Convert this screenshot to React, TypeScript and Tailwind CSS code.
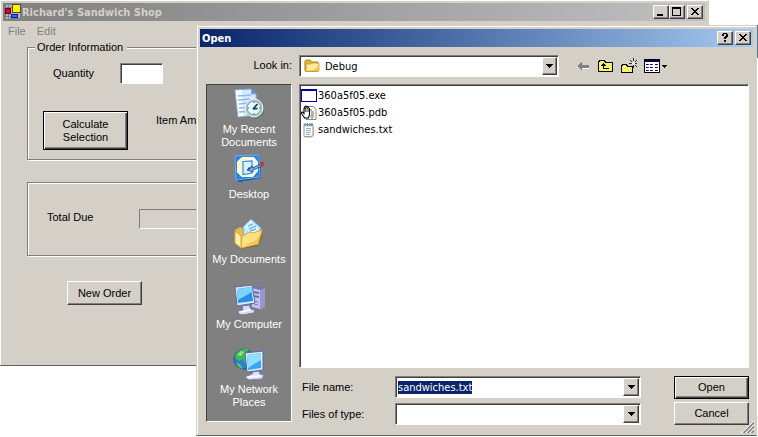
import React, { useEffect, useRef } from "react";

const RAISED =
  "bg-[#d4d0c8] border border-t-white border-l-white border-r-[#404040] border-b-[#404040] shadow-[inset_-1px_-1px_0_#808080]";
const DEFAULT_BUTTON =
  "bg-[#d4d0c8] border border-black shadow-[inset_1px_1px_0_#fff,inset_-1px_-1px_0_#404040,inset_-2px_-2px_0_#808080]";
const SUNKEN =
  "bg-white border border-t-[#808080] border-l-[#808080] border-r-white border-b-white shadow-[inset_1px_1px_0_#404040]";
const WINDOW =
  "bg-[#d4d0c8] border border-t-[#d4d0c8] border-l-[#d4d0c8] border-r-[#d4d0c8] border-b-[#606060] shadow-[inset_1px_1px_0_#fff] p-[3px]";
const ETCHED = "border border-[#808080] shadow-[1px_1px_0_#fff,inset_1px_1px_0_#fff]";
const TAHOMA = "font-['DejaVu_Sans_Condensed','DejaVu_Sans',sans-serif]";

interface CaptionButtonProps {
  label: string;
  path: string;
}

const CaptionButton: React.FC<CaptionButtonProps> = ({ label, path }) => (
  <button aria-label={label} className={`flex h-[14px] w-4 items-center justify-center ${RAISED}`}>
    <svg width="12" height="10" viewBox="0 0 12 10" shapeRendering="crispEdges" className="shrink-0">
      <path d={path} fill="#000" />
    </svg>
  </button>
);

const CLOSE_PATH =
  "M2 1h2v1h1v1h2v-1h1v-1h2v1h-1v1h-1v1h-1v1h1v1h1v1h1v1h-2v-1h-1v-1h-2v1h-1v1h-2v-1h1v-1h1v-1h1v-1h-1v-1h-1v-1h-1z";
const MIN_PATH = "M2 7h6v2h-6z";
const MAX_PATH = "M1 0h9v2h-9zM1 2h1v7h-1zM9 2h1v7h-1zM2 8h7v1h-7z";
const HELP_PATH = "M3 1h1v-1h4v1h1v3h-1v1h-1v1h-2v-2h1v-1h1v-2h-2v2h-2zM5 7h2v2h-2z";

const DropArrow = () => (
  <span className={`pointer-events-none flex w-4 items-center justify-center ${RAISED}`}>
    <svg width="7" height="4" viewBox="0 0 7 4" shapeRendering="crispEdges">
      <path d="M0 0h7v1h-1v1h-1v1h-1v1h-1v-1h-1v-1h-1v-1h-1z" fill="#000" />
    </svg>
  </span>
);

const AppIcon = () => (
  <svg width="16" height="16" viewBox="0 0 16 16" shapeRendering="crispEdges">
    <rect x="0" y="1" width="15" height="14" fill="#b8b8b0" />
    <path d="M0 3.500h7M0 12.500h7M3.500 1v14M.5 1v14M5 14.500h10" stroke="#808080" fill="none" />
    <rect x="7" y="0" width="9" height="9" fill="#505020" />
    <rect x="8" y="1" width="7" height="7" fill="#fff200" />
    <rect x="0" y="4" width="6" height="6" fill="#600018" />
    <rect x="1" y="5" width="4" height="4" fill="#e00030" />
    <rect x="6" y="10" width="7" height="4" fill="#0018a0" />
    <rect x="7" y="11" width="5" height="2" fill="#3070ff" />
  </svg>
);

const FolderIcon = () => (
  <svg width="16" height="16" viewBox="0 0 16 16">
    <path d="M1 3.500Q1 2 2.500 2H6l1.500 2H13q1.500 0 1.500 1.500V12q0 1.500-1.500 1.500H2.500Q1 13.500 1 12z" fill="#e8b83c" stroke="#a87b18" />
    <path d="M2 12.500V6h4.500L8 5h6.500L15 6v6q0 1.500-1.500 1.500H3q-1 0-1-1z" fill="#ffec96" stroke="#c39829" strokeWidth=".8" />
    <path d="M3 12.500Q12 12.500 14.500 7V12q0 1-1 1H3z" fill="#f0c850" />
  </svg>
);

const ExeIcon = () => (
  <svg width="16" height="16" viewBox="0 0 16 16" shapeRendering="crispEdges">
    <rect x="0" y="1" width="16" height="13" fill="#0000a8" />
    <rect x="1" y="3" width="14" height="10" fill="#fff" />
  </svg>
);

// Document with the pan-hand cursor resting on it
const PdbIcon = () => (
  <svg width="16" height="16" viewBox="0 0 16 16">
    <path d="M4.500 1.500h8l2.500 3v10H5z" fill="#fff" stroke="#888" />
    <path d="M8 5h3M10 7h3M10 9h3M9 11h4M10 13h2" stroke="#555" strokeWidth=".9" />
    <path
      d="M3 12L.5 8.500Q0 7 1.500 7L3 8.500V3.500Q3 2 4 3V1.500Q5 .5 5.500 1.500V2Q7 1 7 3Q8.500 2.500 8.500 4.500V9.500L7.500 13H3.500z"
      fill="#fff"
      stroke="#000"
      strokeWidth="1.100"
    />
    <path d="M4.500 3v4M6 3v4M7.200 4v3" stroke="#000" strokeWidth=".6" />
  </svg>
);

const TextIcon = () => (
  <svg width="16" height="16" viewBox="0 0 16 16">
    <path d="M3 2.500h9v10L10.500 14.500H3z" fill="#fff" stroke="#8a98a4" />
    <path d="M4 3h7.500v1.500H4z" fill="#b4cddc" />
    <path d="M4 1v3M6.500 1v3M9 1v3M11 1v3" stroke="#6c7b86" />
    <path d="M5 6.500h5M5 8.500h5M5 10.500h5M5 12.500h4" stroke="#7fa9b6" strokeWidth=".9" />
    <path d="M12.500 5v8L11 15H4" fill="none" stroke="#c8ad80" />
  </svg>
);

const RecentIcon = () => (
  <svg width="32" height="32" viewBox="0 0 32 32">
    <path d="M2 2l16-1 5 5 1 21-19 2z" fill="#d6e9ff" stroke="#87aee0" />
    <path d="M2.500 2.500l6-.5 2 26-5 .5z" fill="#f8fcff" />
    <path d="M18 1l.5 5.500L23 6z" fill="#5b95db" />
    <path d="M5 8l13-1M5 12l12-1M6 16l9-1M6 20l7-.5M6 24l7-.5" stroke="#8cb8ee" strokeWidth="1.300" />
    <circle cx="22" cy="21" r="9.500" fill="#65747d" />
    <circle cx="21" cy="20" r="9" fill="#b3c6c9" stroke="#edf5f5" />
    <circle cx="21" cy="20" r="6.800" fill="#e4fbff" stroke="#899fa7" />
    <path d="M20 21l4.500-5M20 21l4.500-.5" stroke="#143b64" strokeWidth="1.700" />
    <path d="M21 14v1M21 25v1M15 20h1M26 20h1" stroke="#345c78" />
  </svg>
);

const DesktopIcon = () => (
  <svg width="32" height="32" viewBox="0 0 32 32">
    <path d="M2 3l25-1 1 23-22 4-3-3z" fill="#1757a8" />
    <path d="M2 3l24-1 1 22-24 3z" fill="#2f82da" stroke="#65b1f7" />
    <path d="M9 4h12l4 5v9l-5 6H9l-5-5V9z" fill="#eefaff" />
    <path d="M8 5L4 9v10l5 5h5v-3H9V8h8V4z" fill="#fff8ca" />
    <path d="M10 8.500l9-.5v12l-9 1.500z" fill="#d9f0ff" stroke="#328bd7" strokeWidth="1.200" />
    <path d="M14 17l5-4v2l9-4 1 2-9 4v2z" fill="#6eb7ef" stroke="#153e7d" strokeWidth=".8" />
    <path d="M14 17l4-1-2-2z" fill="#174b7e" />
    <circle cx="29" cy="11" r="2.300" fill="#c23d30" />
  </svg>
);

const DocumentsIcon = () => (
  <svg width="32" height="32" viewBox="0 0 32 32">
    <path d="M2 13l6-4 6 2 13-3 2 12-4 8-16 3-7-5z" fill="#8b6b24" />
    <path d="M2 12l5-3 5 2 12-3 1 12-16 9-6-4z" fill="#e9b94f" />
    <path d="M10 9l8-8 10 9-7 14-10-6z" fill="#bfe5ff" stroke="#73b7e6" />
    <path d="M12 9l6-7 8 9-5 7z" fill="#e0f4ff" />
    <path d="M15 8l5-2M16 11l7-3M17 13l6-2" stroke="#70bce5" strokeWidth="1.500" />
    <path d="M9 18l8-4 3 1 9-3-4 14-17 4z" fill="#ffe184" stroke="#d6aa3f" />
    <path d="M2 13l6 5v12l-6-5z" fill="#fff0a9" stroke="#d6aa3f" />
    <path d="M10 28l15-3 3-10-5 7z" fill="#f2c654" />
  </svg>
);

const ComputerIcon = () => (
  <svg width="32" height="32" viewBox="0 0 32 32">
    <path d="M19 5l4-2 9 2v19l-5 3-8-2z" fill="#7376aa" />
    <path d="M19 5l8 2v19l-8-2z" fill="#c3c4ea" />
    <path d="M27 7l5-2v19l-5 3z" fill="#9698ce" />
    <path d="M20 9l6 1M20 13l6 1" stroke="#666fae" strokeWidth="2" />
    <path d="M21 18l4 1M21 21l4 1" stroke="#7b81b7" />
    <path d="M2 4l17-2 3 18-18 3z" fill="#dce8ff" stroke="#586da4" />
    <path d="M4 6l14-2 2 14-15 2z" fill="#268de9" />
    <path d="M4 6l14-2 1 5L5 17z" fill="#7bd3ff" />
    <path d="M9 23l7-1 2 4 4 1-1 3-12 2-5-2 6-3z" fill="#dbdcf2" stroke="#7376a5" />
    <path d="M6 29l12-2" stroke="#fff" strokeWidth="1.500" />
  </svg>
);

const NetworkIcon = () => (
  <svg width="32" height="32" viewBox="0 0 32 32">
    <circle cx="11" cy="11" r="10" fill="#287fd0" stroke="#17569b" />
    <path d="M10 1Q2 3 2 10l4 3 4-2 1 4 4-1-1-4 3-1-4-5 3-2q-3-2-6-1z" fill="#43b84d" />
    <path d="M3 15l4 1 3 5q-5-1-7-6z" fill="#65c45f" />
    <path d="M4 7l4-4 3 1-3 4z" fill="#96e078" />
    <path d="M12 5l18-2v19l-16 2z" fill="#e1e9ff" stroke="#5368a7" />
    <path d="M14 7l14-2v15l-13 2z" fill="#3aa5ee" />
    <path d="M14 7l14-2v7l-13 8z" fill="#8ce0ff" />
    <path d="M20 24l6-1 1 3 4 1-2 4-13 1-4-3 7-3z" fill="#dfdff5" stroke="#7d80ae" />
    <path d="M14 29l13-1" stroke="#fff" strokeWidth="1.500" />
  </svg>
);

const places = [
  { label: "My Recent Documents", icon: <RecentIcon /> },
  { label: "Desktop", icon: <DesktopIcon /> },
  { label: "My Documents", icon: <DocumentsIcon /> },
  { label: "My Computer", icon: <ComputerIcon /> },
  { label: "My Network Places", icon: <NetworkIcon /> },
];

const files = [
  { name: "360a5f05.exe", icon: <ExeIcon /> },
  { name: "360a5f05.pdb", icon: <PdbIcon /> },
  { name: "sandwiches.txt", icon: <TextIcon /> },
];

const ShopWindow = () => (
  <main className={`absolute -top-px -left-px right-[49px] ${WINDOW}`}>
    <header className="flex h-[18px] items-center bg-linear-to-r from-[#808080] to-[#c0c0c0] px-0.5">
      <AppIcon />
      <h1 className={`ml-px flex-1 text-[11px] font-bold text-[#d4d0c8] ${TAHOMA}`}>Richard's Sandwich Shop</h1>
      <CaptionButton label="Minimize" path={MIN_PATH} />
      <CaptionButton label="Maximize" path={MAX_PATH} />
      <div className="ml-0.5 flex">
        <CaptionButton label="Close" path={CLOSE_PATH} />
      </div>
    </header>
    <nav className="flex h-5 items-center gap-[11px] pl-[5px] text-[#808080]">
      <button>File</button>
      <button>Edit</button>
    </nav>

    <div className="px-6 pb-[57px]">
      <fieldset className={`h-[119px] pl-[15px] ${ETCHED}`}>
        <legend className="-ml-2 bg-[#d4d0c8] pr-1 pl-0.5">Order Information</legend>
        <div className="flex items-center pt-[9px] pl-[10px]">
          <label htmlFor="quantity" className="w-[67px]">Quantity</label>
          <input id="quantity" className={`h-[21px] w-[43px] px-1 outline-none ${SUNKEN}`} />
        </div>
        <div className="mt-[27px] flex items-start">
          <button className={`h-[39px] w-[85px] px-2 leading-[13px] ${DEFAULT_BUTTON}`}>
            Calculate Selection
          </button>
          <span className="ml-7 pt-[3px] whitespace-nowrap">Item Amount</span>
        </div>
      </fieldset>

      <section className={`mt-[22px] flex h-[74px] items-center pl-[19px] ${ETCHED}`}>
        <label htmlFor="total" className="w-[92px] pb-1">Total Due</label>
        <output
          id="total"
          className="h-5 w-[90px] border border-t-[#808080] border-l-[#808080] border-r-white border-b-white"
        />
      </section>

      <button className={`mt-[25px] ml-10 h-6 w-[75px] ${RAISED}`}>New Order</button>
    </div>
  </main>
);

const Toolbar = () => (
  <div className="flex w-[189px] items-center pl-[17px]">
    <button aria-label="Back">
      <svg width="14" height="16" viewBox="0 0 14 16" shapeRendering="crispEdges">
        <path d="M1 8h1v-1h1v-1h1v-1h1v-1h1v3h7v3h-7v2h-1v-1h-1v-1h-1v-1h-1v-1h-1z" fill="#808080" />
        <path d="M6 10.500h7" stroke="#fff" />
      </svg>
    </button>
    <button aria-label="Up One Level" className="ml-2">
      <svg width="16" height="16" viewBox="0 0 16 16" shapeRendering="crispEdges">
        <path d="M0 3h1v-1h6v1h1v1h7v10h-15z" fill="#000" />
        <path d="M1 4h1v-1h4v1h1v1h7v8h-13z" fill="#f6f070" />
        <path d="M5 5h1v1h1v1h1v1h-2v2h5v1h-6v-3h-2v-1h1v-1h1z" fill="#000" />
      </svg>
    </button>
    <button aria-label="Create New Folder" className="ml-[7px]">
      <svg width="17" height="16" viewBox="0 0 17 16" shapeRendering="crispEdges">
        <path d="M0 7h1v-1h5v1h1v1h5v7h-12z" fill="#000" />
        <path d="M1 8h1v-1h3v1h1v1h5v5h-10z" fill="#f6f070" />
        <path d="M12 0h1v3h-1zM12 7h1v3h-1zM8 5h3v1h-3zM14 5h2v1h-2zM9 2h1v1h1v1h-1v-1h-1zM15 2h1v1h-1v1h-1v-1h1zM14 7h1v1h1v1h-1v-1h-1z" fill="#303030" />
        <path d="M12 4h1v1h1v1h-1v1h-1v-1h-1v-1h1z" fill="#fff" />
      </svg>
    </button>
    <button aria-label="Views" className="ml-1.5 flex items-center gap-0.5">
      <svg width="16" height="16" viewBox="0 0 16 16" shapeRendering="crispEdges">
        <path d="M.5 1.500h15v13h-15z" fill="#fff" stroke="#000" />
        <path d="M1 2h14v2h-14z" fill="#000060" />
        <path d="M2 6h2v1h-2zM6 6h2v1h-2zM11 6h2v1h-2zM2 9h2v1h-2zM6 9h2v1h-2zM11 9h2v1h-2zM2 12h2v1h-2zM6 12h2v1h-2zM11 12h2v1h-2z" fill="#000080" />
        <path d="M4 6h1v1h-1zM8 6h1v1h-1zM13 6h1v1h-1zM4 9h1v1h-1zM8 9h1v1h-1zM13 9h1v1h-1zM4 12h1v1h-1zM8 12h1v1h-1zM13 12h1v1h-1z" fill="#404040" />
      </svg>
      <svg width="5" height="3" viewBox="0 0 5 3" shapeRendering="crispEdges">
        <path d="M0 0h5v1h-1v1h-1v1h-1v-1h-1v-1h-1z" fill="#000" />
      </svg>
    </button>
  </div>
);

const OpenDialog = () => {
  const nameRef = useRef<HTMLInputElement>(null);

  useEffect(() => {
    nameRef.current?.focus();
    nameRef.current?.select();
  }, []);

  return (
    <section role="dialog" aria-labelledby="open-title" className={`absolute top-[25px] right-px left-[196px] ${WINDOW}`}>
      <header className="flex h-[18px] items-center bg-linear-to-r from-[#0a246a] to-[#a6caf0] px-0.5">
        <h2 id="open-title" className={`flex-1 text-[11px] font-bold text-white ${TAHOMA}`}>Open</h2>
        <div className="flex gap-0.5">
          <CaptionButton label="Help" path={HELP_PATH} />
          <CaptionButton label="Close" path={CLOSE_PATH} />
        </div>
      </header>

      <div className="flex pt-2 pr-[5px] pl-[6px]">
        <label htmlFor="look-in" className="w-[93px] pt-1 pr-[7px] text-right">Look in:</label>
        <div className={`relative flex h-[22px] flex-1 p-px ${SUNKEN}`}>
          <span className="pointer-events-none absolute top-0.5 left-1">
            <FolderIcon />
          </span>
          <select id="look-in" className={`w-full appearance-none pl-6 outline-none ${TAHOMA}`}>
            <option>Debug</option>
          </select>
          <DropArrow />
        </div>
        <Toolbar />
      </div>

      <div className="flex items-start gap-[7px] pt-[7px] pr-1 pb-[7px] pl-[6px]">
        <nav className="w-[86px] border border-t-[#404040] border-l-[#404040] border-r-white border-b-white bg-[#808080] pt-[3px] pb-2 text-white">
          {places.map((place) => (
            <button key={place.label} className="flex h-[65px] w-full flex-col items-center gap-[3px] px-1">
              {place.icon}
              <span className="leading-[13px]">{place.label}</span>
            </button>
          ))}
        </nav>

        <div className="flex flex-1 flex-col">
          <ul className={`h-[284px] px-px pt-0.5 ${SUNKEN}`}>
            {files.map((file) => (
              <li key={file.name} className="flex h-[17px] items-center gap-px">
                {file.icon}
                <span className={TAHOMA}>{file.name}</span>
              </li>
            ))}
          </ul>

          <div className="mt-2 flex justify-between">
            <div className="grid w-[342px] grid-cols-[96px_1fr] items-center gap-y-[5px]">
              <label htmlFor="file-name" className="pl-[3px]">File name:</label>
              <div className={`flex h-[22px] p-px ${SUNKEN}`}>
                <input
                  id="file-name"
                  ref={nameRef}
                  defaultValue="sandwiches.txt"
                  className={`my-0.5 ml-px min-w-0 flex-1 outline-none selection:bg-[#0a246a] selection:text-white ${TAHOMA}`}
                />
                <DropArrow />
              </div>
              <label htmlFor="file-type" className="pl-[3px]">Files of type:</label>
              <div className={`flex h-[22px] p-px ${SUNKEN}`}>
                <select id="file-type" className="min-w-0 flex-1 appearance-none outline-none">
                  <option></option>
                </select>
                <DropArrow />
              </div>
            </div>
            <div className="flex w-[75px] flex-col gap-[3px]">
              <button className={`h-[23px] ${DEFAULT_BUTTON}`}>Open</button>
              <button className={`h-[23px] ${RAISED}`}>Cancel</button>
            </div>
          </div>
        </div>
      </div>

      <svg width="12" height="12" viewBox="0 0 12 12" className="absolute right-0.5 bottom-0.5">
        <path d="M0 12L12 0M4 12l8-8M8 12l4-4" stroke="#fff" />
        <path d="M1.500 12L12 1.500M5.500 12L12 5.500M9.500 12L12 9.500" stroke="#808080" strokeWidth="1.500" />
      </svg>
    </section>
  );
};

export default function App() {
  return (
    <div className="relative min-h-screen overflow-hidden bg-white font-['Liberation_Sans',Arial,sans-serif] text-[11px] leading-[13px] text-black">
      <ShopWindow />
      <div className="absolute top-[25px] right-0 h-[33px] w-px bg-[#4a7ba8]" />
      <OpenDialog />
    </div>
  );
}
